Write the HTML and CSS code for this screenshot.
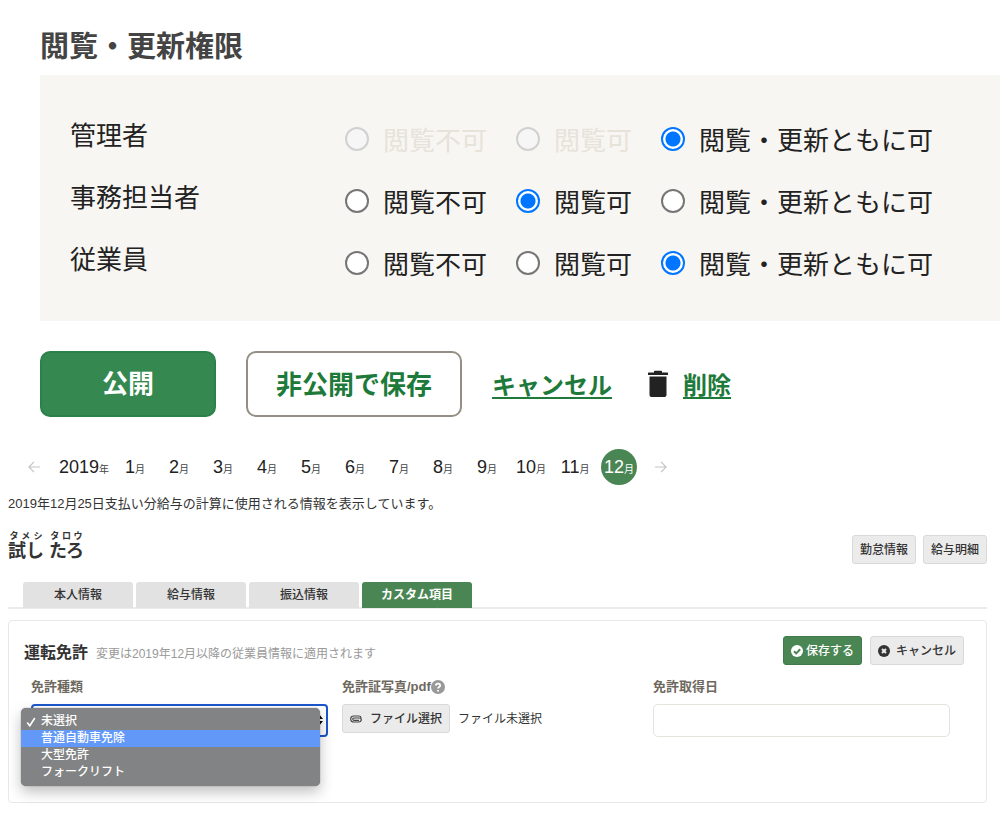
FILE: index.html
```html
<!DOCTYPE html>
<html lang="ja">
<head>
<meta charset="utf-8">
<meta name="viewport" content="width=device-width, initial-scale=1">
<title>閲覧・更新権限</title>
<link rel="stylesheet" href="styles.css">
</head>
<body>
<form class="permissions">
  <h1 class="permissions-title">閲覧・更新権限</h1>
  <div class="permissions-panel">
    <div class="role" role="radiogroup" aria-labelledby="role-admin">
      <span class="role-name" id="role-admin">管理者</span>
      <div class="role-options">
        <label class="option option-disabled"><input class="radio" type="radio" name="admin" disabled>閲覧不可</label>
        <label class="option option-disabled"><input class="radio" type="radio" name="admin" disabled>閲覧可</label>
        <label class="option"><input class="radio" type="radio" name="admin" checked>閲覧・更新ともに可</label>
      </div>
    </div>
    <div class="role" role="radiogroup" aria-labelledby="role-staff">
      <span class="role-name" id="role-staff">事務担当者</span>
      <div class="role-options">
        <label class="option"><input class="radio" type="radio" name="staff">閲覧不可</label>
        <label class="option"><input class="radio" type="radio" name="staff" checked>閲覧可</label>
        <label class="option"><input class="radio" type="radio" name="staff">閲覧・更新ともに可</label>
      </div>
    </div>
    <div class="role" role="radiogroup" aria-labelledby="role-employee">
      <span class="role-name" id="role-employee">従業員</span>
      <div class="role-options">
        <label class="option"><input class="radio" type="radio" name="employee">閲覧不可</label>
        <label class="option"><input class="radio" type="radio" name="employee">閲覧可</label>
        <label class="option"><input class="radio" type="radio" name="employee" checked>閲覧・更新ともに可</label>
      </div>
    </div>
  </div>
  <div class="actions">
    <button class="action action-primary" type="button">公開</button>
    <button class="action action-outline" type="button">非公開で保存</button>
    <a class="action-link" href="#">キャンセル</a>
    <span class="delete">
      <svg class="trash" viewBox="0 0 22 28" aria-hidden="true"><path d="M7 2.4V1.6Q7 .8 7.8.8h6.400Q15 .8 15 1.600v.8h5.400q.6 0 .6.6V5H1V3q0-.6.6-.6zM2.500 6.600h17V25q0 2-2 2h-13q-2 0-2-2z"/></svg>
      <a class="action-link" href="#">削除</a>
    </span>
  </div>
</form>

<main class="employee">
  <nav class="months" aria-label="支払月">
    <a class="month-arrow" href="#" aria-label="前へ"><svg class="arrow" viewBox="0 0 12 12" aria-hidden="true"><path d="M12 6H1M6 .8.9 6 6 11.200"/></svg></a>
    <a class="year" href="#">2019<small class="unit">年</small></a>
    <a class="month" href="#">1<small class="unit">月</small></a>
    <a class="month" href="#">2<small class="unit">月</small></a>
    <a class="month" href="#">3<small class="unit">月</small></a>
    <a class="month" href="#">4<small class="unit">月</small></a>
    <a class="month" href="#">5<small class="unit">月</small></a>
    <a class="month" href="#">6<small class="unit">月</small></a>
    <a class="month" href="#">7<small class="unit">月</small></a>
    <a class="month" href="#">8<small class="unit">月</small></a>
    <a class="month" href="#">9<small class="unit">月</small></a>
    <a class="month" href="#">10<small class="unit">月</small></a>
    <a class="month" href="#">11<small class="unit">月</small></a>
    <a class="month month-current" href="#" aria-current="date">12<small class="unit">月</small></a>
    <a class="month-arrow month-next" href="#" aria-label="次へ"><svg class="arrow" viewBox="0 0 12 12" aria-hidden="true"><path d="M0 6h11M6 .8 11.100 6 6 11.200"/></svg></a>
  </nav>
  <p class="notice">2019年12月25日支払い分給与の計算に使用される情報を表示しています。</p>

  <header class="person">
    <h2 class="person-name"><ruby>試し<rt>タメシ</rt></ruby> <ruby>たろ<rt>タロウ</rt></ruby></h2>
    <div class="person-actions">
      <button class="btn" type="button">勤怠情報</button>
      <button class="btn" type="button">給与明細</button>
    </div>
  </header>

  <nav class="tabs" aria-label="従業員情報">
    <a class="tab" href="#">本人情報</a>
    <a class="tab" href="#">給与情報</a>
    <a class="tab" href="#">振込情報</a>
    <a class="tab tab-current" href="#" aria-current="page">カスタム項目</a>
  </nav>

  <form class="card">
    <div class="card-head">
      <h3 class="card-title">運転免許</h3>
      <p class="card-note">変更は2019年12月以降の従業員情報に適用されます</p>
      <div class="card-actions">
        <button class="btn btn-save" type="button"><svg class="icon" viewBox="0 0 12 12" aria-hidden="true"><circle class="disc" cx="6" cy="6" r="6"/><path class="mark-save" d="M3 6.200 5.200 8.400 9.200 4.200"/></svg>保存する</button>
        <button class="btn btn-cancel" type="button"><svg class="icon" viewBox="0 0 12 12" aria-hidden="true"><circle class="disc" cx="6" cy="6" r="6"/><path class="mark-cancel" d="m4 4 4 4M8 4 4 8"/></svg>キャンセル</button>
      </div>
    </div>
    <div class="fields">
      <div class="field">
        <label class="field-label" for="license-type">免許種類</label>
        <div class="select-box">
          <select class="control select" id="license-type">
            <option>未選択</option>
            <option>普通自動車免除</option>
            <option>大型免許</option>
            <option>フォークリフト</option>
          </select>
          <svg class="select-arrows" viewBox="0 0 8 12" aria-hidden="true"><path d="M4 0 8 5H0zM4 12 0 7h8z"/></svg>
          <ul class="menu" role="listbox" aria-label="免許種類">
            <li class="menu-item" role="option" aria-selected="true"><svg class="check" viewBox="0 0 10 10" aria-hidden="true"><path d="M1.200 5.600 3.800 8.800 8.800 1"/></svg>未選択</li>
            <li class="menu-item menu-item-active" role="option" aria-selected="false">普通自動車免除</li>
            <li class="menu-item" role="option" aria-selected="false">大型免許</li>
            <li class="menu-item" role="option" aria-selected="false">フォークリフト</li>
          </ul>
        </div>
      </div>
      <div class="field">
        <span class="field-label" id="file-label">免許証写真/pdf<svg class="help" viewBox="0 0 14 14" aria-hidden="true"><circle cx="7" cy="7" r="7"/><path d="M4.900 5.500C4.900 2.900 9.200 2.900 9.200 5.400 9.200 7 7 6.900 7 8.600M7 9.900v1.500"/></svg></span>
        <div class="file">
          <button class="btn btn-file" type="button" aria-describedby="file-label"><svg class="clip" viewBox="0 0 12 8" aria-hidden="true"><path d="M9 5.400H4.200Q2.800 5.400 2.800 4.200T4.200 3H9Q11.300 3 11.300 4.400 11.300 7 8.600 7H3.800Q.7 7 .7 4T3.800 1H8.600Q10.700 1 11.200 2.800"/></svg>ファイル選択</button>
          <span class="file-status">ファイル未選択</span>
        </div>
      </div>
      <div class="field">
        <label class="field-label" for="license-date">免許取得日</label>
        <input class="control" id="license-date" type="text">
      </div>
    </div>
  </form>
</main>
</body>
</html>
```
FILE: styles.css
```css
* { box-sizing: border-box; }

body {
  margin: 0;
  background: #fff;
  color: #222;
  font-family: "Liberation Sans", "Noto Sans CJK JP", sans-serif;
}

h1, h2, h3, p, ul { margin: 0; padding: 0; }
button, input, select { font: inherit; }
a { color: inherit; text-decoration: none; }

/* Permissions */
.permissions {
  padding: 23px 0 0 40px;
  font-family: "Noto Sans CJK JP", sans-serif;
}

.permissions-title {
  color: #444;
  font-size: 29px;
  line-height: 42px;
}

.permissions-panel {
  display: flex;
  flex-direction: column;
  gap: 24px;
  margin-top: 10px;
  padding: 45px 30px 39px;
  background: #f8f6f3;
  font-size: 26px;
}

.role {
  display: grid;
  grid-template-columns: 275px 1fr;
  align-items: start;
  white-space: nowrap;
}

.role-name { line-height: 28px; }
.role-options { display: flex; gap: 29px; }

.option {
  display: flex;
  align-items: center;
  gap: 14px;
  line-height: 38px;
}

.option-disabled { color: #e7e2da; }

.radio {
  appearance: none;
  flex: none;
  width: 24px;
  height: 24px;
  margin: 0;
  border: 2px solid #767676;
  border-radius: 50%;
  background: #fff;
}

.radio:checked {
  border-color: #0075ff;
  background: radial-gradient(circle, #0075ff 7px, #fff 8px);
}

.radio:disabled { border-color: #d1d1d1; background: #f6f6f6; }

.actions {
  display: flex;
  align-items: center;
  gap: 30px;
  margin-top: 30px;
}

.action {
  height: 66px;
  border-radius: 10px;
  font-size: 26px;
  font-weight: 700;
  line-height: 38px;
}

.action-primary {
  padding: 0 60px 5px;
  border: 2px solid #2b8148;
  background: #358850;
  color: #fff;
}

.action-outline {
  padding: 0 28px 2px;
  border: 2px solid #958e84;
  background: #fff;
  color: #1d7a3a;
}

.action-link {
  color: #1d7a3a;
  font-size: 24px;
  font-weight: 700;
  line-height: 36px;
  text-decoration: underline;
  text-decoration-thickness: 2px;
  text-underline-offset: 3px;
}

.delete { display: flex; align-items: center; gap: 14px; margin-left: 5px; }
.trash { width: 22px; height: 28px; fill: #222; }

/* Employee */
.employee { padding: 32px 13px 24px 8px; }

.months {
  display: flex;
  align-items: center;
  gap: 8px;
  padding-left: 20px;
  font-size: 18px;
  line-height: 36px;
  white-space: nowrap;
}

.year { margin-left: 11px; }
.year, .month { height: 36px; }
.month { width: 36px; text-align: center; }
.unit { font-size: 10px; line-height: 10px; color: #444; }

.month-current { border-radius: 50%; background: #4a8653; color: #fff; }
.month-current .unit { color: #fff; }

.month-arrow { display: flex; }
.month-next { margin-left: 10px; }
.arrow { width: 12px; height: 12px; fill: none; stroke: #c4c4c4; stroke-width: 1.2; }

.notice {
  margin-top: 9px;
  color: #333;
  font-size: 13px;
  line-height: 20px;
}

.person {
  display: flex;
  justify-content: space-between;
  align-items: flex-start;
  height: 54px;
  margin-top: 14px;
}

.person-name { color: #333; font-size: 18px; line-height: 24px; margin-top: 3px; }
.person-name rt { font-size: 9px; line-height: 10px; }
.person-actions { display: flex; gap: 7px; margin-top: 7px; }

.btn {
  display: inline-flex;
  align-items: center;
  height: 29px;
  padding: 0 7px;
  border: 1px solid #d9d9d9;
  border-radius: 3px;
  background: #ebebeb;
  color: #333;
  font-size: 12px;
  font-weight: 500;
  line-height: 18px;
  white-space: nowrap;
}

.tabs {
  display: flex;
  gap: 3px;
  padding-left: 15px;
  border-bottom: 2px solid #ebebeb;
}

.tab {
  width: 110px;
  margin-bottom: -1px;
  border-radius: 3px 3px 0 0;
  background: #e2e2e2;
  color: #333;
  font-size: 12px;
  font-weight: 500;
  line-height: 26px;
  text-align: center;
}

.tab-current { background: #4a8653; color: #fff; font-weight: 700; }

.card {
  margin-top: 11px;
  padding: 15px 22px 65px 15px;
  border: 1px solid #e8e8e8;
  border-radius: 4px;
}

.card-head { display: flex; align-items: center; gap: 8px; }
.card-title { color: #333; font-size: 16px; line-height: 24px; margin-top: 4px; }
.card-note { color: #999; font-size: 12px; line-height: 18px; margin-top: 6px; }
.card-actions { display: flex; gap: 8px; margin-left: auto; }

.btn-save { gap: 3px; border-color: #427a4a; background: #4a8653; color: #fff; }
.btn-cancel { gap: 6px; }

.icon { width: 12px; height: 12px; fill: none; }
.disc { fill: currentColor; }
.mark-save { stroke: #4a8653; stroke-width: 2; }
.mark-cancel { stroke: #ebebeb; stroke-width: 2; }

.fields {
  display: grid;
  grid-template-columns: repeat(3, 1fr);
  gap: 14px;
  margin-top: 12px;
  padding: 0 14px 0 7px;
}

.field { display: flex; flex-direction: column; gap: 7px; min-width: 0; }

.field-label {
  display: flex;
  align-items: center;
  color: #6e695e;
  font-size: 13px;
  font-weight: 700;
  line-height: 20px;
}

.help { width: 14px; height: 14px; fill: #999; }
.help path { fill: none; stroke: #fff; stroke-width: 1.8; }

.control {
  width: 100%;
  height: 33px;
  padding: 0 8px;
  border: 1px solid #e5e3dc;
  border-radius: 5px;
  background: #fff;
  color: #333;
  font-size: 12px;
}

.select-box { position: relative; }
.select { display: block; appearance: none; border: 2px solid #1c57c9; border-radius: 4px; }

.select-arrows {
  position: absolute;
  top: 10px;
  right: 5px;
  width: 8px;
  height: 12px;
}

.menu {
  position: absolute;
  top: 4px;
  left: -10px;
  right: 8px;
  padding: 5px 0;
  border-radius: 5px;
  background: #828384;
  box-shadow: 0 6px 14px rgba(0, 0, 0, .25), 0 0 1px #555;
  color: #fff;
  font-size: 12px;
  font-weight: 500;
  list-style: none;
}

.menu-item { position: relative; padding-left: 20px; height: 17px; line-height: 17px; }
.menu-item-active { background: #6299f8; }

.check {
  position: absolute;
  top: 4px;
  left: 5px;
  width: 10px;
  height: 10px;
  fill: none;
  stroke: #fff;
  stroke-width: 1.6;
}

.file { display: flex; align-items: center; gap: 8px; }
.btn-file { gap: 8px; }
.clip { width: 12px; height: 8px; fill: none; stroke: #444; stroke-width: 1.2; }
.file-status { color: #333; font-size: 12px; line-height: 18px; white-space: nowrap; }
```
